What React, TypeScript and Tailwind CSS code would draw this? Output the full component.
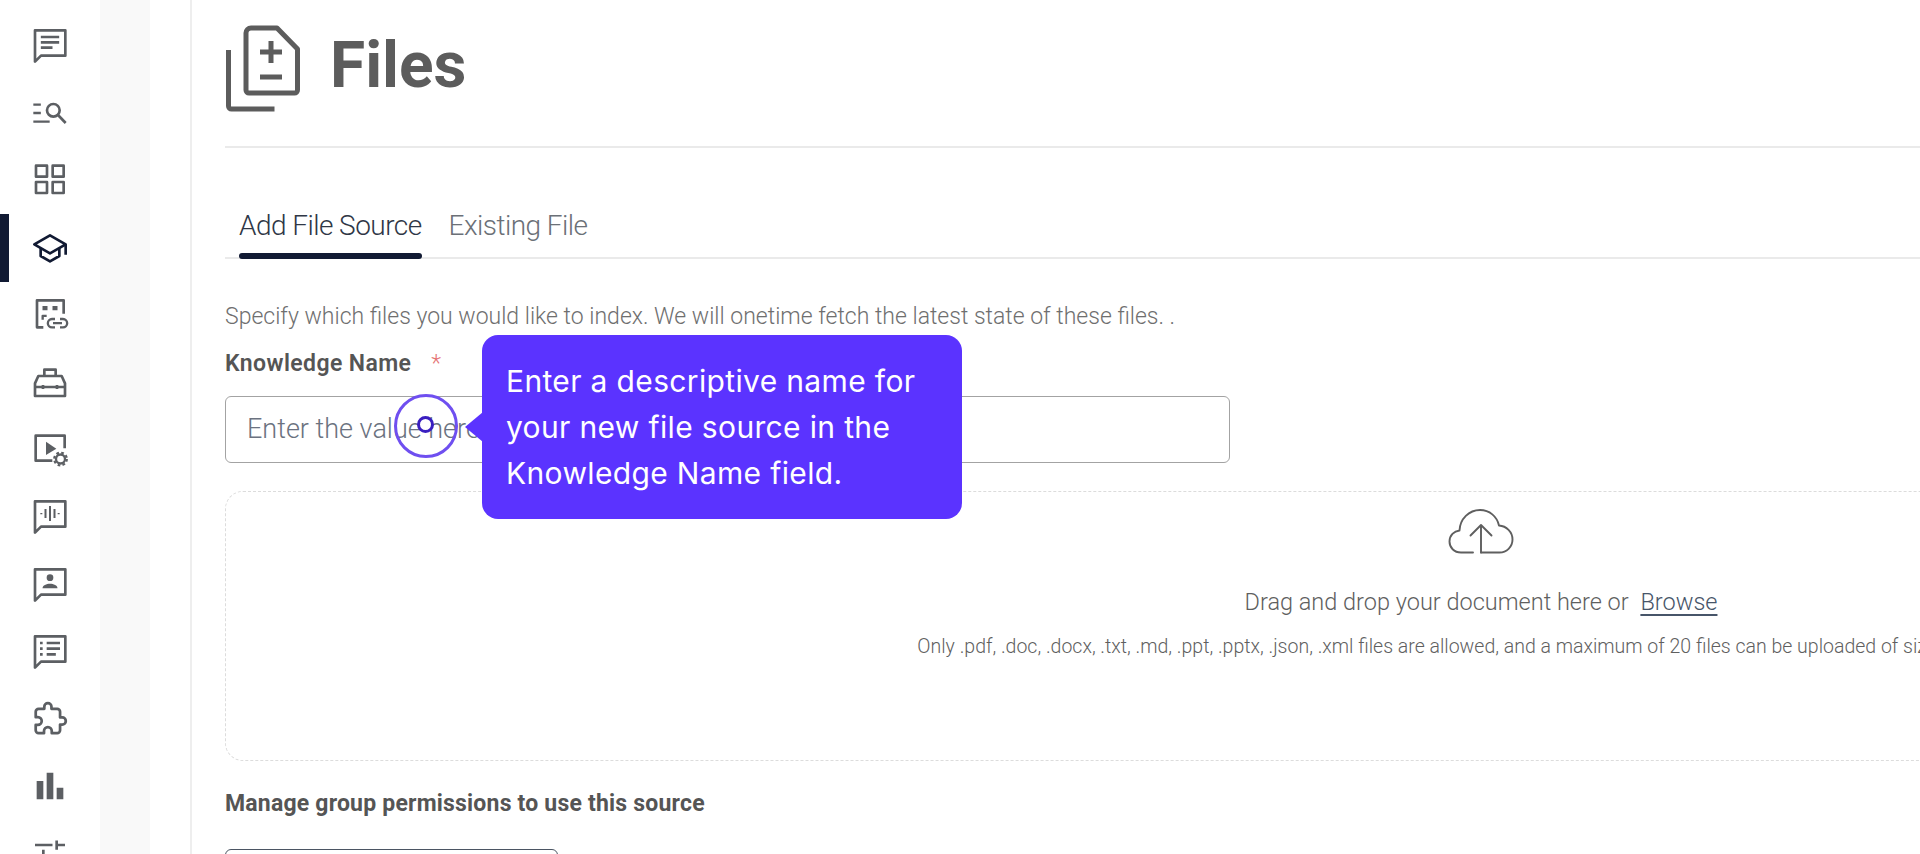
import React from "react";
import { MdBarChart } from "react-icons/md";

const Ico = ({ children }: { children?: React.ReactNode }) => (
  <svg viewBox="0 0 24 24" className="h-10 w-10" fill="none" stroke="currentColor" strokeWidth="1.6" strokeLinejoin="round">
    {children}
  </svg>
);

const Chat = ({ children }: { children?: React.ReactNode }) => (
  <Ico>
    <path d="M3 3.2h18.2v15.2H6.6L3 22z" />
    {children}
  </Ico>
);

const icons: React.ReactNode[] = [
  <Chat>
    <path d="M6.5 7.2h11M6.5 10.4h11M6.5 13.6h7" />
  </Chat>,
  <Ico>
    <path d="M2 7.6h4.5M2 12.6h4.5M2 17.8h9.8" strokeWidth="1.4" />
    <circle cx="14" cy="11" r="3.8" />
    <path d="m16.8 13.8 4.6 4.8" />
  </Ico>,
  <Ico>
    <path d="M3.6 4h6.6v6.6H3.6zM13.6 4h6.6v6.6h-6.6zM3.6 13.8h6.6v6.6H3.6zM13.6 13.8h6.6v6.6h-6.6z" />
  </Ico>,
  <Ico>
    <path d="M2.6 10.4 12 5l9.4 5.4L12 15.8z" />
    <path d="M6.4 12.8v4.6L12 20.6l5.6-3.2v-4.6M21.4 10.4v6.2" />
  </Ico>,
  <Ico>
    <path d="M8 20H4.2V3.8h16v8" />
    <path d="M7.5 7.2h3v2.6h-3zM13.5 7.2h3v2.6h-3z" fill="currentColor" stroke="none" />
    <path d="M7.6 15.5v-2.4h2.4" strokeWidth="1.4" />
    <path d="M15 15h-1.8a2.5 2.5 0 0 0 0 5H15M18 15h1.8a2.5 2.5 0 0 1 0 5H18M13.8 17.5h5.4" strokeWidth="1.4" />
  </Ico>,
  <Ico>
    <path d="M8.6 8.4V4.6h6.8v3.8" />
    <path d="M3 20.4v-7.6L5 8.4h14l2 4.4v7.6z" />
    <path d="M3 15h18M7.8 13.8v2.4M16.2 13.8v2.4" />
  </Ico>,
  <Ico>
    <path d="M13.4 19H3.4V4h17.4v7.6" />
    <path d="M9.6 7.6 15.8 11.8 9.6 15.6z" fill="currentColor" stroke="none" />
    <circle cx="18.3" cy="18" r="2.7" strokeWidth="1.4" />
    <circle cx="18.3" cy="18" r="3.8" strokeWidth="1.3" strokeDasharray="1.6 1.38" />
  </Ico>,
  <Chat>
    <path d="M12 6v9M9.3 7.8v5.4M14.7 7.8v5.4M6.8 10.2v.8M17.2 10.2v.8" strokeWidth="1.2" />
  </Chat>,
  <Chat>
    <circle cx="12" cy="8.2" r="2" fill="currentColor" stroke="none" />
    <path d="M7.5 14.6c0-1.8 2.4-2.7 4.5-2.7s4.5.9 4.5 2.7z" fill="currentColor" stroke="none" />
  </Chat>,
  <Chat>
    <path d="M10 7.2h8M10 10.6h8M10 14h5.5" />
    <path d="M6 6.4h1.6V8H6zM6 9.8h1.6v1.6H6zM6 13.2h1.6v1.6H6z" fill="currentColor" stroke="none" />
  </Chat>,
  <Ico>
    <path
      transform="translate(1.7 1.6) scale(0.86)"
      strokeWidth="1.9"
      d="M20.5 11H19V7c0-1.1-.9-2-2-2h-4V3.5C13 2.12 11.88 1 10.5 1S8 2.12 8 3.5V5H4c-1.1 0-1.99.9-1.99 2v3.8H3.5c1.49 0 2.7 1.21 2.7 2.7s-1.21 2.7-2.7 2.7H2V20c0 1.1.9 2 2 2h3.8v-1.5c0-1.49 1.21-2.7 2.7-2.7s2.7 1.21 2.7 2.7V22H17c1.1 0 2-.9 2-2v-4h1.5c1.38 0 2.5-1.12 2.5-2.5S21.88 11 20.5 11z"
    />
  </Ico>,
  <MdBarChart className="h-10 w-10" />,
  <Ico>
    <path d="M3 7.2h10.5M16 4.5V10M16 7.2h5M8 10v5.5" />
  </Ico>,
];

const FilesIcon = () => (
  <svg viewBox="0 0 76 87" className="h-[87px] w-[76px] shrink-0 text-[#5c5c5c]" fill="none" stroke="currentColor" strokeWidth="5">
    <path d="M3.5 25v56a3 3 0 0 0 3 3h43" />
    <path d="M26 3h26l20.5 21v41a3 3 0 0 1-3 3H24a3 3 0 0 1-3-3V8a5 5 0 0 1 5-5z" strokeLinejoin="round" />
    <path d="M46 16v22M35 27h22M35 52h22" />
  </svg>
);

const CloudIcon = () => (
  <svg viewBox="0 0 66 46" className="h-[46px] w-[66px] text-[#5f5f5f]" fill="none" stroke="currentColor" strokeWidth="1.9" strokeLinecap="round" strokeLinejoin="round">
    <path d="M25 44.5H13C6 44.5 1.5 39.5 1.5 33.5 1.5 27.5 6 23 11.5 22.5 12 11 21 2 32 2c9.5 0 17 6.5 19 15.5 7.5.5 13.5 6.5 13.5 14 0 7.5-6 13-13 13H33" />
    <path d="M33 44.5V17M22.5 27.5 33 17l10.5 10.5" />
  </svg>
);

export default function App() {
  return (
    <div className="relative flex h-[854px] w-[1920px] overflow-hidden bg-white font-['Roboto',sans-serif]">
      <nav className="w-[100px] shrink-0 pt-[11px] text-[#5c5f63]">
        {icons.map((icon, i) => (
          <div key={i} className={`relative flex h-[67.4px] items-center justify-center ${i === 3 ? "text-[#111a33]" : ""}`}>
            {i === 3 && <span className="absolute left-0 top-[1px] h-[68px] w-[9px] bg-[#111a33]" />}
            {icon}
          </div>
        ))}
      </nav>
      <div className="w-[50px] shrink-0 bg-[#f9f9f9]" />
      <div className="w-[40px] shrink-0" />
      <main className="w-[2547px] shrink-0 border-l-2 border-[#eeeeee] pl-[33px]">
        <header className="flex h-[148px] items-start border-b-2 border-[#eaeaea] pt-[25px]">
          <FilesIcon />
          <h1 className="ml-[29px] mt-[6px] text-[64px] font-bold leading-[70px] text-[#5c5c5c]">Files</h1>
        </header>
        <div className="mt-[47px] flex h-[64px] border-b-2 border-[#eaeaea] pl-[14px] text-[28px] font-light tracking-[-0.55px]">
          <div className="relative h-[62px] leading-[62px] text-[#2f3746]">
            Add File Source
            <span className="absolute bottom-[-2px] left-0 h-[6px] w-full rounded-full bg-[#111a33]" />
          </div>
          <div className="ml-[27px] leading-[62px] text-[#6b7077]">Existing File</div>
        </div>
        <p className="mt-[44px] text-[23px] font-light leading-[28px] text-[#6f6f6f]">
          Specify which files you would like to index. We will onetime fetch the latest state of these files. .
        </p>
        <label className="mt-[19px] flex h-[28px] items-center text-[23px] font-semibold tracking-[0.4px] text-[#555555]">
          Knowledge Name
          <span className="ml-[20px] font-light text-[#e57373]">*</span>
        </label>
        <div className="mt-[18px] flex h-[67px] w-[1005px] items-center rounded-[6px] border border-[#a3a3a3] pl-[21px] text-[27px] font-light text-[#6b7280]">
          Enter the value here
        </div>
        <section className="mt-[28px] flex h-[270px] w-[2512px] flex-col items-center rounded-[18px] border border-dashed border-[#dcdcdc] pt-[16px]">
          <CloudIcon />
          <p className="mt-[33px] text-[23.5px] font-light leading-[30px] text-[#5f5f5f]">
            Drag and drop your document here or{" "}
            <span className="ml-[6px] text-[#475569] underline underline-offset-[4px]">Browse</span>
          </p>
          <p className="mt-[18px] whitespace-nowrap text-[19.5px] font-light leading-[24px] text-[#5f5f5f]">
            Only .pdf, .doc, .docx, .txt, .md, .ppt, .pptx, .json, .xml files are allowed, and a maximum of 20 files can be uploaded of size up to 10MB.
          </p>
        </section>
        <h2 className="mt-[30px] text-[23px] font-bold leading-[26px] tracking-[0.2px] text-[#555555]">Manage group permissions to use this source</h2>
        <div className="mt-[32px] h-[60px] w-[333px] rounded-[6px] border border-[#4b5563]" />
      </main>

      <div className="absolute left-[394px] top-[394px] h-[64px] w-[64px] rounded-full border-[3.5px] border-[#6f4ff0]" />
      <div className="absolute left-[417px] top-[416px] h-[17px] w-[17px] rounded-full border-[3.5px] border-[#3a1fc0] bg-white" />
      <div className="absolute left-[465px] top-[412px] h-0 w-0 border-y-[15.5px] border-r-[18px] border-y-transparent border-r-[#5b33ff]" />
      <div className="absolute left-[482px] top-[335px] h-[184px] w-[480px] rounded-[16px] bg-[#5b33ff] px-[24px] pt-[23px] font-['Inter',sans-serif] text-[30px] leading-[46px] tracking-[0.35px] text-white">
        Enter a descriptive name for your new file source in the Knowledge Name field.
      </div>
    </div>
  );
}
